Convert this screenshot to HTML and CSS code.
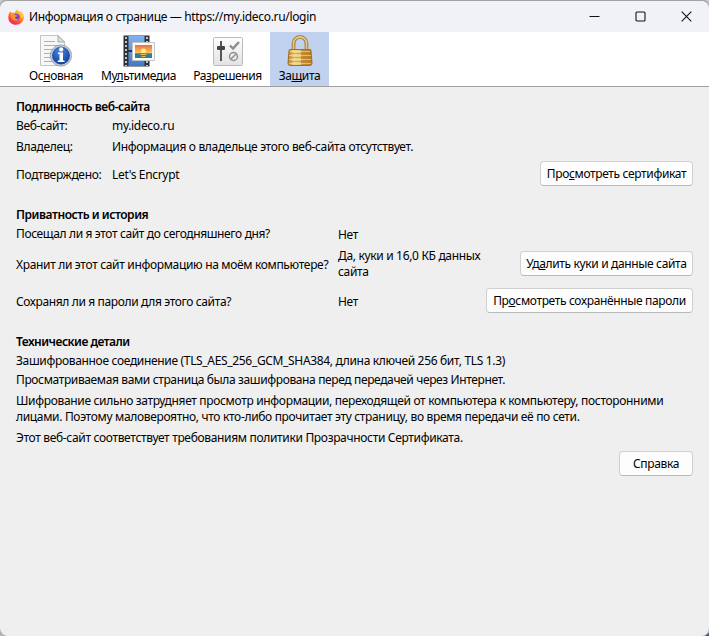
FILE: index.html
```
<!DOCTYPE html>
<html lang="ru">
<head>
<meta charset="utf-8">
<title>Информация о странице</title>
<link rel="stylesheet" href="styles.css">
</head>
<body>
<div class="window">
  <header class="titlebar">
    <svg class="logo" width="16" height="16" viewBox="0 0 16 16">
      <defs>
        <linearGradient id="fox" x1=".85" y1="0" x2=".25" y2="1"><stop offset="0" stop-color="#ffe14a"/><stop offset=".4" stop-color="#ff9a25"/><stop offset=".75" stop-color="#ff4244"/><stop offset="1" stop-color="#e81c72"/></linearGradient>
      </defs>
      <path d="M2.2 2.600 3.800 4 5 3.400l1.600 .6C7.200 2 8.500 1 9.500.2c.3 1.400 1.200 2 2.100 2.700l1-.8c2 1.700 3.200 3.900 3.200 6.200 0 4.200-3.500 7.500-7.800 7.500S.3 12.700.3 8.500c0-2.200.6-4.400 1.900-5.900z" fill="url(#fox)"/>
      <circle cx="8" cy="8.300" r="3.600" fill="#7540c8"/>
      <path d="M2 4.500c2-.6 4.200-.1 5.200 1.600 1 .3 1.800.3 2.300.4-.5 1.200-2.200 1.200-2.600 2.200.6 1.500 2.800 1.900 4.200.5C10.600 12 6 13 4 9.700 3 8 3 6 2 4.500z" fill="#ff9226"/>
      <path d="M10 2c2.500 1.500 4 4 3 7.500.8-.4 1.300-1 1.600-2-.2-2.500-1.600-4.300-4.600-5.500z" fill="#ffdf48"/>
    </svg>
    <span class="caption">Информация о странице — https://my.ideco.ru/login</span>
    <div class="controls">
      <svg width="11" height="11" viewBox="0 0 11 11"><path d="M.5 5.500h10" /></svg>
      <svg width="11" height="11" viewBox="0 0 11 11"><rect x="1" y="1" width="9" height="9" rx="1"/></svg>
      <svg width="11" height="11" viewBox="0 0 11 11"><path d="M.7.7l9.600 9.600M10.300.7.7 10.300"/></svg>
    </div>
  </header>

  <nav class="toolbar">
    <a class="tab tab-general">
      <svg width="32" height="32" viewBox="0 0 32 32">
        <defs><radialGradient id="info" cx=".45" cy=".3" r=".75"><stop offset="0" stop-color="#4f8ae0"/><stop offset=".6" stop-color="#1f54b0"/><stop offset="1" stop-color="#123c88"/></radialGradient></defs>
        <path d="M.5.5h17.500l6.500 6.500v23.500H.5z" fill="#f7f7f7" stroke="#c4c4c4"/>
        <path d="M18 .5V7h6.500z" fill="#ddd" stroke="#aaa"/>
        <path d="M4 6.500h11M4 10.500h17M4 14.500h10M4 18.500h7M4 22.500h7M4 26.500h9" stroke="#b0b0b0"/>
        <circle cx="21" cy="20.500" r="9.800" fill="url(#info)" stroke="#c3cad6" stroke-width="1.600"/>
        <circle cx="21" cy="20.500" r="10.700" fill="none" stroke="#7c8596" stroke-width=".6"/>
        <path d="M18 17.500h5v8h1.500v1.600h-6.800v-1.600h1.800v-6.400H18z" fill="#fff"/><circle cx="21.200" cy="14.400" r="2.100" fill="#fff"/>
      </svg>
      <span>Ос<u>н</u>овная</span>
    </a>
    <a class="tab tab-media">
      <svg width="32" height="32" viewBox="0 0 32 32">
        <defs>
          <linearGradient id="film" x2="0" y2="1"><stop offset="0" stop-color="#82b3ee"/><stop offset="1" stop-color="#3d7ccc"/></linearGradient>
          <linearGradient id="sky" x2="0" y2="1"><stop offset="0" stop-color="#ea6e48"/><stop offset="1" stop-color="#ffc751"/></linearGradient>
        </defs>
        <path d="M.5.500h26v31H.5z" fill="#2e3236"/>
        <path d="M5.500 1h16v14h-16zM5.500 17h16v14h-16z" fill="url(#film)"/>
        <path d="M3 2v29M24 2v29" stroke="#c3c6c9" stroke-width="2" stroke-dasharray="2 2"/>
        <path d="M9.500 7.500h22v18h-22z" fill="#fafafa" stroke="#c5c5c5"/>
        <path d="M12 10h17v8H12z" fill="url(#sky)"/><path d="M12 18h17v5H12z" fill="#347d94"/>
        <circle cx="20.500" cy="16" r="2.600" fill="#fff17b"/><path d="M12 18h17v1H12z" fill="#c26e3f"/>
        <path d="M17.500 19.500h6M18.500 21.500h4" stroke="#e7ba61"/>
      </svg>
      <span>Му<u>л</u>ьтимедиа</span>
    </a>
    <a class="tab tab-perm">
      <svg width="32" height="32" viewBox="0 0 32 32">
        <defs><linearGradient id="panel" x2="0" y2="1"><stop offset="0" stop-color="#fdfdfd"/><stop offset="1" stop-color="#e3e3e3"/></linearGradient></defs>
        <rect x="1.500" y="2.500" width="29" height="28" rx="1" fill="url(#panel)" stroke="#bcbcbc"/>
        <path d="M9 6v20" stroke="#555" stroke-width="2"/><rect x="5" y="11" width="8" height="4" rx="1" fill="#444"/>
        <path d="M18 10.500l3 3 6-6.500" fill="none" stroke="#8b8b8b" stroke-width="2.300"/>
        <g fill="none" stroke="#929292" stroke-width="1.500"><circle cx="21.500" cy="21.500" r="4"/><path d="M18.700 24.300l5.600-5.600"/></g>
      </svg>
      <span>Ра<u>з</u>решения</span>
    </a>
    <a class="tab tab-security active">
      <svg width="32" height="32" viewBox="0 0 32 32">
        <defs>
          <linearGradient id="brass"><stop offset="0" stop-color="#b77e2c"/><stop offset=".25" stop-color="#f0d68c"/><stop offset=".52" stop-color="#e9c974"/><stop offset=".56" stop-color="#c6903a"/><stop offset="1" stop-color="#b77a24"/></linearGradient>
        </defs>
        <path d="M9.500 16V8.500a6.500 6.500 0 0 1 13 0V16" fill="none" stroke="#94702f" stroke-width="3.600"/>
        <path d="M9.500 16V8.500a6.500 6.500 0 0 1 13 0V16" fill="none" stroke="#e6cb86" stroke-width="1.800"/>
        <path d="M5 15.500q0-1 1-1h20q1 0 1 1L28 28q0 2.500-2 2.500H6Q4 30.500 4 28z" fill="url(#brass)" stroke="#a36f23"/>
        <path d="M6 16.500h20M5 20.500h22M5 24.500h22M5 28.500h22" stroke="#f5df9d" stroke-opacity=".6"/>
        <path d="M6 18.500h20M5 22.500h22M5 26.500h22" stroke="#b37a29" stroke-opacity=".45"/>
      </svg>
      <span>За<u>щ</u>ита</span>
    </a>
  </nav>

  <main class="content">
    <section class="identity">
      <h2>Подлинность веб-сайта</h2>
      <dl class="facts">
        <dt>Веб-сайт:</dt><dd>my.ideco.ru</dd>
        <dt>Владелец:</dt><dd>Информация о владельце этого веб-сайта отсутствует.</dd>
        <dt class="label">Подтверждено:</dt><dd><span class="label">Let's Encrypt</span><button class="cert">Про<u>с</u>мотреть сертификат</button></dd>
      </dl>
    </section>

    <section class="privacy">
      <h2>Приватность и история</h2>
      <div class="row visited"><span class="tight">Посещал ли я этот сайт до сегодняшнего дня?</span><span class="answer">Нет</span></div>
      <div class="row stored"><span class="label">Хранит ли этот сайт информацию на моём компьютере?</span><span class="amount">Да, куки и 16,0 КБ данных сайта</span><button class="cookies">Уд<u>а</u>лить куки и данные сайта</button></div>
      <div class="row saved"><span class="label tight">Сохранял ли я пароли для этого сайта?</span><span class="label">Нет</span><button class="passwords">Пр<u>о</u>смотреть сохранённые пароли</button></div>
    </section>

    <section class="technical">
      <h2>Технические детали</h2>
      <p class="cipher">Зашифрованное соединение (TLS_AES_256_GCM_SHA384, длина ключей 256 бит, TLS 1.3)</p>
      <p class="tight">Просматриваемая вами страница была зашифрована перед передачей через Интернет.</p>
      <p>Шифрование сильно затрудняет просмотр информации, переходящей от компьютера к компьютеру, посторонними<br>лицами. Поэтому маловероятно, что кто-либо прочитает эту страницу, во время передачи её по сети.</p>
      <p class="policy">Этот веб-сайт соответствует требованиям политики Прозрачности Сертификата.</p>
    </section>
    <footer><button class="help">Справка</button></footer>
  </main>
</div>
</body>
</html>
```
FILE: styles.css
```
* { box-sizing: border-box; }
html { background: linear-gradient(90deg, #b5b7b8 50%, #1857b0 50%); height: 100%; }
body { margin: 0; font: 12px/16px "Noto Sans", sans-serif; letter-spacing: -.33px; color: #000; height: 636px; overflow: hidden; }
body::before { content: ""; position: absolute; inset: 0 0 auto; height: 20px; background: #c8cac8; }
.window { position: relative; height: 636px; background: #efefef; border-top: 1px solid #a3a3a3; border-radius: 8px; overflow: hidden; box-shadow: 0 0 0 1px #aaa; }
.titlebar { display: flex; align-items: center; height: 31px; padding: 0 17px 0 8px; background: #f1f2f8; }
.caption { margin-left: 5px; white-space: nowrap; }
.controls { display: flex; gap: 35px; margin-left: auto; }
.controls svg { display: block; fill: none; stroke: #111; stroke-width: 1.1; }
.toolbar { display: flex; height: 55px; padding-left: 20px; background: #fff; border-bottom: 1px solid #a0a0a0; }
.tab { display: flex; flex-direction: column; align-items: center; padding-top: 3px; white-space: nowrap; letter-spacing: -.4px; }
.tab svg { display: block; }
.tab span { margin-top: 1px; }
.tab-general { width: 72px; }
.tab-media { width: 93px; }
.tab-perm { width: 85px; }
.tab-security { width: 59px; }
.active { background: #c1d2ee; }
u { text-underline-offset: 1px; text-decoration-thickness: 1px; text-decoration-skip-ink: none; }
.tight { letter-spacing: -.37px; }

.content { padding: 12px 16px; }
h2 { margin: 0 0 3px; font-size: 12px; line-height: 16px; font-weight: 600; letter-spacing: -.43px; }
button { height: 25px; padding: 0; border: 1px solid #d0d0d0; border-bottom-color: #b9b9b9; border-radius: 4px; background: #fdfdfd; font: inherit; letter-spacing: -.35px; color: #000; white-space: nowrap; }
.cert { width: 153px; }
.cookies { width: 173px; }
.passwords { width: 207px; }
.help { width: 74px; }
.label { padding-top: 3px; }

.facts { display: grid; grid-template-columns: 96px 1fr; grid-template-rows: 16px 26px 27px; align-items: center; margin: 0; white-space: nowrap; }
.facts dd { display: flex; align-items: center; justify-content: space-between; margin: 0; }

.privacy { margin-top: 20px; }
.privacy h2 { margin-bottom: 3px; letter-spacing: -.45px; }
.row { display: grid; grid-template-columns: 322px 148px 1fr; align-items: center; }
.row span:first-child { white-space: nowrap; }
.row button { justify-self: end; }
.visited { height: 16px; align-items: start; }
.answer { padding-top: 1px; }
.stored { height: 43px; }
.amount { padding-top: 1px; }
.saved { height: 31px; }

.technical { margin-top: 18px; white-space: nowrap; }
.technical h2 { letter-spacing: -.5px; }
p { margin: 0 0 5px; }
.cipher { margin-bottom: 3px; }
footer { display: flex; justify-content: flex-end; }
```
